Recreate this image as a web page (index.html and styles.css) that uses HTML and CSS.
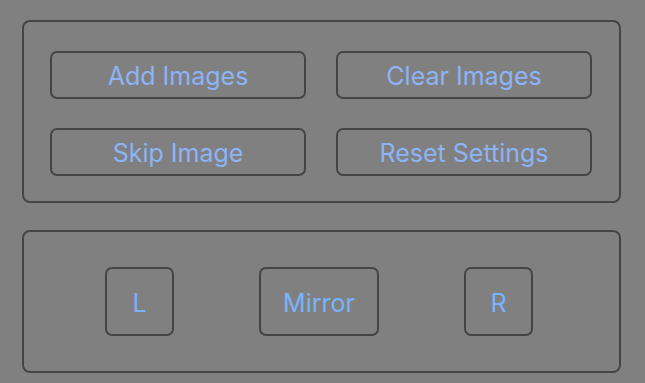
FILE: index.html
```html
<!DOCTYPE html>
<html lang="en">
<head>
    <meta charset="UTF-8">
    <title>Image Controls</title>
    <link rel="stylesheet" href="styles.css">
</head>
<body>

<div class="panel panel-actions">
    <button class="btn">Add Images</button>
    <button class="btn">Clear Images</button>
    <button class="btn">Skip Image</button>
    <button class="btn">Reset Settings</button>
</div>

<div class="panel panel-flip">
    <button class="btn btn-square">L</button>
    <button class="btn btn-mirror">Mirror</button>
    <button class="btn btn-square">R</button>
</div>

</body>
</html>
```

FILE: styles.css
```css
:root {
    --bg: #808080;
    --line: #454545;
    --text: #8cb4f6;
    --text-alt: #78b4fc;
}

* { box-sizing: border-box; }

body {
    margin: 0;
    padding: 20px 24px 0 22px;
    background: var(--bg);
    font-family: Inter, "Noto Sans", sans-serif;
    display: flex;
    flex-direction: column;
    gap: 27px;
}

.panel {
    border: 2px solid var(--line);
    border-radius: 8px;
}

/* Top block: 2x2 grid of wide buttons */
.panel-actions {
    display: grid;
    grid-template-columns: 256px 256px;
    grid-auto-rows: 48px;
    gap: 29px 30px;
    padding: 29px 26px 25px;
    height: 183px;
}

.btn {
    background: none;
    border: 2px solid var(--line);
    border-radius: 7px;
    color: var(--text);
    font-family: inherit;
    font-size: 25px;
    font-weight: 400;
    padding: 2px 0 0;
    cursor: pointer;
}

/* Bottom block: L / Mirror / R */
.panel-flip {
    height: 143px;
    display: flex;
    gap: 85px;
    padding-left: 81px;
    align-items: center;
}

.panel-flip .btn { height: 69px; color: var(--text-alt); }
.btn-square { width: 69px; }
.btn-mirror { width: 120px; }
```
